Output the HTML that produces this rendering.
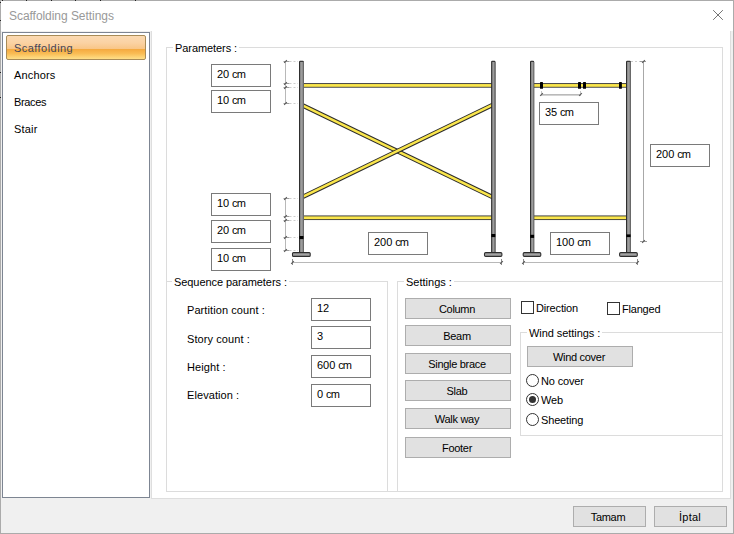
<!DOCTYPE html>
<html>
<head>
<meta charset="utf-8">
<title>Scaffolding Settings</title>
<style>
html,body{margin:0;padding:0;}
body{width:734px;height:534px;overflow:hidden;background:#fff;font-family:"Liberation Sans",sans-serif;font-size:11px;color:#000;position:relative;}
#win{position:absolute;left:0;top:0;width:732px;height:532px;border:1px solid #ababab;background:#f0f0f0;}
#titlebar{position:absolute;left:1px;top:1px;width:732px;height:30px;background:#fff;}
#title{position:absolute;left:9px;top:9px;font-size:12px;line-height:14px;color:#999;white-space:nowrap;letter-spacing:-0.05px;}
.abs{position:absolute;}
.t{position:absolute;white-space:nowrap;line-height:14px;font-size:11px;}
#side{position:absolute;left:2px;top:32px;width:146px;height:464px;border:1px solid #7d8592;background:#fff;}
#page{position:absolute;left:151px;top:31px;width:578px;height:467px;background:#fff;border:1px solid #dedede;border-top:none;}
.sel{position:absolute;left:6px;top:35px;width:138px;height:23px;border:1px solid #a88b57;border-radius:2px;
 background:linear-gradient(to bottom,#fbdab2 0%,#fbd2a3 30%,#f9c688 55%,#f5aa40 58%,#f9bc54 76%,#fdd477 92%,#ffdf88 100%);}
.si{position:absolute;left:14px;white-space:nowrap;font-size:11px;line-height:14px;letter-spacing:0.45px;}
.gb{position:absolute;border:1px solid #dcdcdc;}
.gl{position:absolute;background:#fff;padding:0 2px;white-space:nowrap;line-height:14px;font-size:11px;}
.in{position:absolute;width:58px;height:21px;border:1px solid #7a7a7a;background:#fff;}
.in span{position:absolute;left:5px;top:2px;line-height:14px;font-size:11px;white-space:nowrap;word-spacing:-0.2px;}
.in span b{font-weight:normal;letter-spacing:-0.85px;}
.btn{position:absolute;height:19px;border:1px solid #adadad;background:#e1e1e1;text-align:center;line-height:21px;font-size:11px;white-space:nowrap;letter-spacing:-0.3px;text-indent:-2px;}
.cb{position:absolute;width:11px;height:11px;border:1px solid #333;background:#fff;}
.rb{position:absolute;width:11px;height:11px;border:1px solid #333;border-radius:50%;background:#fff;}
.rb i{position:absolute;left:2px;top:2px;width:7px;height:7px;border-radius:50%;background:#333;}
.tick{position:absolute;background:#222;}
</style>
</head>
<body>
<div id="win"></div>
<div id="titlebar"></div>
<div id="title">Scaffolding Settings</div>
<!-- close X -->
<svg class="abs" style="left:708px;top:5px" width="20" height="20" viewBox="0 0 20 20"><path d="M5.5 5.5 L14.5 14.5 M14.5 5.5 L5.5 14.5" stroke="#747474" stroke-width="1" stroke-linecap="square" fill="none"/></svg>

<!-- ruler ticks on border -->
<div class="tick" style="left:2px;top:0;width:1px;height:1px"></div>
<div class="tick" style="left:26px;top:0;width:1px;height:1px"></div>
<div class="tick" style="left:51px;top:0;width:1px;height:1px"></div>
<div class="tick" style="left:75px;top:0;width:1px;height:1px"></div>
<div class="tick" style="left:100px;top:0;width:1px;height:1px"></div>
<div class="tick" style="left:135px;top:0;width:1px;height:1px"></div>
<div class="tick" style="left:0;top:2px;width:1px;height:1px"></div>
<div class="tick" style="left:0;top:20px;width:1px;height:1px"></div>
<div class="tick" style="left:0;top:72px;width:1px;height:1px"></div>
<div class="tick" style="left:0;top:97px;width:1px;height:1px"></div>

<!-- sidebar -->
<div id="side"></div>
<div class="sel"></div>
<div class="si" style="top:41px;color:#454558">Scaffolding</div>
<div class="si" style="top:68px;letter-spacing:0.17px">Anchors</div>
<div class="si" style="top:95px;letter-spacing:-0.35px">Braces</div>
<div class="si" style="top:122px;letter-spacing:0.2px">Stair</div>

<!-- page -->
<div id="page"></div>

<!-- group boxes -->
<div class="gb" style="left:166px;top:47px;width:555px;height:443px"></div>
<div class="gb" style="left:166px;top:281px;width:220px;height:209px;background:#fff;border-bottom:none;"></div>
<div class="gb" style="left:397px;top:281px;width:324px;height:209px;background:#fff;border-bottom:none;border-right:none"></div>
<div class="abs" style="left:388px;top:281px;width:9px;height:1px;background:#fff"></div>
<div class="gb" style="left:520px;top:332px;width:201px;height:102px;border-right:none"></div>
<div class="gl" style="left:173px;top:41px;letter-spacing:-0.08px">Parameters :</div>
<div class="gl" style="left:172px;top:275px;letter-spacing:-0.07px">Sequence parameters :</div>
<div class="gl" style="left:404px;top:275px">Settings :</div>
<div class="gl" style="left:527px;top:326px;letter-spacing:-0.06px">Wind settings :</div>

<!-- parameter inputs -->
<div class="in" style="left:211px;top:64px"><span>20 <b>cm</b></span></div>
<div class="in" style="left:211px;top:90px"><span>10 <b>cm</b></span></div>
<div class="in" style="left:211px;top:193px"><span>10 <b>cm</b></span></div>
<div class="in" style="left:211px;top:220px"><span>20 <b>cm</b></span></div>
<div class="in" style="left:211px;top:248px"><span>10 <b>cm</b></span></div>
<div class="in" style="left:368px;top:232px"><span>200 <b>cm</b></span></div>
<div class="in" style="left:539px;top:102px"><span>35 <b>cm</b></span></div>
<div class="in" style="left:650px;top:144px"><span>200 <b>cm</b></span></div>
<div class="in" style="left:550px;top:232px"><span>100 <b>cm</b></span></div>

<!-- drawing -->
<svg class="abs" style="left:0;top:0" width="734" height="534" viewBox="0 0 734 534">
 <g stroke-width="1" fill="none">
  <path d="M285.5 61.5 V103.5" stroke="#b8b8b8"/>
  <path d="M283.5 61.5 H289.5" stroke="#9c9c9c"/><path d="M289.5 61.5 H298.0" stroke="#cdcdcd" stroke-dasharray="2 2"/><path d="M284.15 62.85 L286.85 60.15" stroke="#5a5a5a" stroke-width="1.1"/>
  <path d="M283.5 83.5 H289.5" stroke="#9c9c9c"/><path d="M289.5 83.5 H298.0" stroke="#cdcdcd" stroke-dasharray="2 2"/><path d="M284.15 84.85 L286.85 82.15" stroke="#5a5a5a" stroke-width="1.1"/>
  <path d="M283.5 87.5 H289.5" stroke="#9c9c9c"/><path d="M289.5 87.5 H298.0" stroke="#cdcdcd" stroke-dasharray="2 2"/><path d="M284.15 88.85 L286.85 86.15" stroke="#5a5a5a" stroke-width="1.1"/>
  <path d="M283.5 103.5 H289.5" stroke="#9c9c9c"/><path d="M289.5 103.5 H298.0" stroke="#cdcdcd" stroke-dasharray="2 2"/><path d="M284.15 104.85 L286.85 102.15" stroke="#5a5a5a" stroke-width="1.1"/>
  <path d="M285.5 198.5 V250.5" stroke="#b8b8b8"/>
  <path d="M283.5 198.5 H289.5" stroke="#9c9c9c"/><path d="M289.5 198.5 H298.0" stroke="#cdcdcd" stroke-dasharray="2 2"/><path d="M284.15 199.85 L286.85 197.15" stroke="#5a5a5a" stroke-width="1.1"/>
  <path d="M283.5 216.5 H289.5" stroke="#9c9c9c"/><path d="M289.5 216.5 H298.0" stroke="#cdcdcd" stroke-dasharray="2 2"/><path d="M284.15 217.85 L286.85 215.15" stroke="#5a5a5a" stroke-width="1.1"/>
  <path d="M283.5 220.5 H289.5" stroke="#9c9c9c"/><path d="M289.5 220.5 H298.0" stroke="#cdcdcd" stroke-dasharray="2 2"/><path d="M284.15 221.85 L286.85 219.15" stroke="#5a5a5a" stroke-width="1.1"/>
  <path d="M283.5 237.5 H289.5" stroke="#9c9c9c"/><path d="M289.5 237.5 H298.0" stroke="#cdcdcd" stroke-dasharray="2 2"/><path d="M284.15 238.85 L286.85 236.15" stroke="#5a5a5a" stroke-width="1.1"/>
  <path d="M283.5 250.5 H289.5" stroke="#9c9c9c"/><path d="M289.5 250.5 H298.0" stroke="#cdcdcd" stroke-dasharray="2 2"/><path d="M284.15 251.85 L286.85 249.15" stroke="#5a5a5a" stroke-width="1.1"/>
  <path d="M292.5 262.5 H501.5" stroke="#b8b8b8"/>
  <path d="M292.5 259.0 V265.0" stroke="#8c8c8c"/><path d="M291.15 263.85 L293.85 261.15" stroke="#5a5a5a" stroke-width="1.1"/>
  <path d="M501.5 259.0 V265.0" stroke="#8c8c8c"/><path d="M500.15 263.85 L502.85 261.15" stroke="#5a5a5a" stroke-width="1.1"/>
  <path d="M523.5 262.5 H637.5" stroke="#b8b8b8"/>
  <path d="M523.5 259.0 V265.0" stroke="#8c8c8c"/><path d="M522.15 263.85 L524.85 261.15" stroke="#5a5a5a" stroke-width="1.1"/>
  <path d="M637.5 259.0 V265.0" stroke="#8c8c8c"/><path d="M636.15 263.85 L638.85 261.15" stroke="#5a5a5a" stroke-width="1.1"/>
  <path d="M541.5 94.9 H580.5" stroke="#8e8e8e"/>
  <path d="M541.5 91 V96" stroke="#c4c4c4"/><path d="M540.15 95.85 L542.85 93.15" stroke="#5a5a5a" stroke-width="1.1"/>
  <path d="M580.5 91 V96" stroke="#c4c4c4"/><path d="M579.15 95.85 L581.85 93.15" stroke="#5a5a5a" stroke-width="1.1"/>
  <path d="M643.5 61.5 V241.5" stroke="#a8a8a8"/>
  <path d="M631 61.5 H640" stroke="#cdcdcd" stroke-dasharray="2 2"/><path d="M640 61.5 H646" stroke="#9c9c9c"/><path d="M642.15 62.85 L644.85 60.15" stroke="#5a5a5a" stroke-width="1.1"/>
  <path d="M640 241.5 H647" stroke="#9c9c9c"/><path d="M642.15 242.85 L644.85 240.15" stroke="#5a5a5a" stroke-width="1.1"/>
 </g>
 <g fill="none" stroke-linecap="butt">
  <path d="M301 104.65 L493 197.3" stroke="#2b2b2b" stroke-width="4.5"/>
  <path d="M301 104.65 L493 197.3" stroke="#fae64c" stroke-width="2.5"/>
  <path d="M301 197.7 L493 104.7" stroke="#2b2b2b" stroke-width="4.5"/>
  <path d="M301 197.7 L493 104.7" stroke="#fae64c" stroke-width="2.5"/>
 </g>
 <g>
  <rect x="301" y="83.1" width="192" height="4.6" fill="#3a3a3a"/>
  <rect x="301" y="84.05" width="192" height="2.75" fill="#fae64c"/>
  <rect x="301" y="215.45" width="192" height="4.6" fill="#3a3a3a"/>
  <rect x="301" y="216.39999999999998" width="192" height="2.75" fill="#fae64c"/>
  <rect x="532" y="83.1" width="96" height="4.6" fill="#3a3a3a"/>
  <rect x="532" y="84.05" width="96" height="2.75" fill="#fae64c"/>
  <rect x="532" y="215.45" width="96" height="4.6" fill="#3a3a3a"/>
  <rect x="532" y="216.39999999999998" width="96" height="2.75" fill="#fae64c"/>
 </g>
 <g fill="#000">
  <rect x="540" y="82" width="3" height="6.8" rx="0.6"/>
  <rect x="578" y="82" width="3" height="6.8" rx="0.6"/>
  <rect x="583" y="82" width="3" height="6.8" rx="0.6"/>
  <rect x="619" y="82" width="2.9" height="6.8" rx="0.6"/>
 </g>
 <g>
  <rect x="299" y="60.8" width="4.9" height="192" rx="1.2" fill="#2e2e2e"/>
  <rect x="302.7" y="62" width="1.2" height="190.8" fill="#6e6e6e"/>
  <rect x="300.15" y="61.9" width="2.7" height="191" fill="#9c9c9c"/>
  <rect x="491.1" y="60.8" width="4.4" height="192" rx="1.2" fill="#2e2e2e"/>
  <rect x="494.3" y="62" width="1.2" height="190.8" fill="#6e6e6e"/>
  <rect x="492.25" y="61.9" width="2.2" height="191" fill="#9c9c9c"/>
  <rect x="530" y="60.8" width="4.2" height="192" rx="1.2" fill="#2e2e2e"/>
  <rect x="533.0" y="62" width="1.2" height="190.8" fill="#6e6e6e"/>
  <rect x="531.15" y="61.9" width="2.0" height="191" fill="#9c9c9c"/>
  <rect x="626" y="60.8" width="4.9" height="192" rx="1.2" fill="#2e2e2e"/>
  <rect x="629.6999999999999" y="62" width="1.2" height="190.8" fill="#6e6e6e"/>
  <rect x="627.15" y="61.9" width="2.7" height="191" fill="#9c9c9c"/>
 </g>
 <g fill="#000">
  <rect x="299.3" y="236" width="4.2" height="3.1"/>
  <rect x="491.3" y="234" width="4" height="3.1"/>
  <rect x="530.2" y="234.8" width="3.9" height="3.1"/>
  <rect x="626.3" y="234.4" width="4.3" height="2.7"/>
 </g>
 <g fill="#a2a2a2" stroke="#2e2e2e" stroke-width="1.1">
  <rect x="292.5" y="252.6" width="17.7" height="3.8" rx="1"/>
  <rect x="484.5" y="252.6" width="17.4" height="3.8" rx="1.2"/>
  <rect x="523.2" y="252.6" width="17.6" height="3.8" rx="1.2"/>
  <rect x="619.6" y="252.6" width="17.7" height="3.8" rx="1.2"/>
 </g>
</svg>

<!-- sequence params -->
<div class="t" style="left:187px;top:303px;letter-spacing:0.08px">Partition count :</div>
<div class="t" style="left:187px;top:332px;letter-spacing:0.08px">Story count :</div>
<div class="t" style="left:187px;top:360px;letter-spacing:0.08px">Height :</div>
<div class="t" style="left:187px;top:388px;letter-spacing:0.08px">Elevation :</div>
<div class="in" style="left:311px;top:298px"><span>12</span></div>
<div class="in" style="left:311px;top:326px"><span>3</span></div>
<div class="in" style="left:311px;top:355px"><span>600 <b>cm</b></span></div>
<div class="in" style="left:311px;top:384px"><span>0 <b>cm</b></span></div>

<!-- settings buttons -->
<div class="btn" style="left:405px;top:298px;width:104px">Column</div>
<div class="btn" style="left:405px;top:325px;width:104px">Beam</div>
<div class="btn" style="left:405px;top:353px;width:104px">Single brace</div>
<div class="btn" style="left:405px;top:380px;width:104px">Slab</div>
<div class="btn" style="left:405px;top:408px;width:104px">Walk way</div>
<div class="btn" style="left:405px;top:437px;width:104px">Footer</div>

<div class="cb" style="left:521px;top:301px"></div>
<div class="t" style="left:536px;top:301px;letter-spacing:-0.15px">Direction</div>
<div class="cb" style="left:607px;top:302px"></div>
<div class="t" style="left:622px;top:302px;letter-spacing:-0.2px">Flanged</div>

<div class="btn" style="left:527px;top:346px;width:104px">Wind cover</div>
<div class="rb" style="left:526px;top:374px"></div>
<div class="t" style="left:541px;top:374px;letter-spacing:-0.15px">No cover</div>
<div class="rb" style="left:526px;top:393px"><i></i></div>
<div class="t" style="left:541px;top:393px;letter-spacing:-0.15px">Web</div>
<div class="rb" style="left:526px;top:413px"></div>
<div class="t" style="left:541px;top:413px;letter-spacing:-0.15px">Sheeting</div>

<!-- bottom buttons -->
<div class="btn" style="left:573px;top:506px;width:71px;text-indent:-3px">Tamam</div>
<div class="btn" style="left:654px;top:506px;width:71px;text-indent:-1px;letter-spacing:0.2px">İptal</div>
</body>
</html>
